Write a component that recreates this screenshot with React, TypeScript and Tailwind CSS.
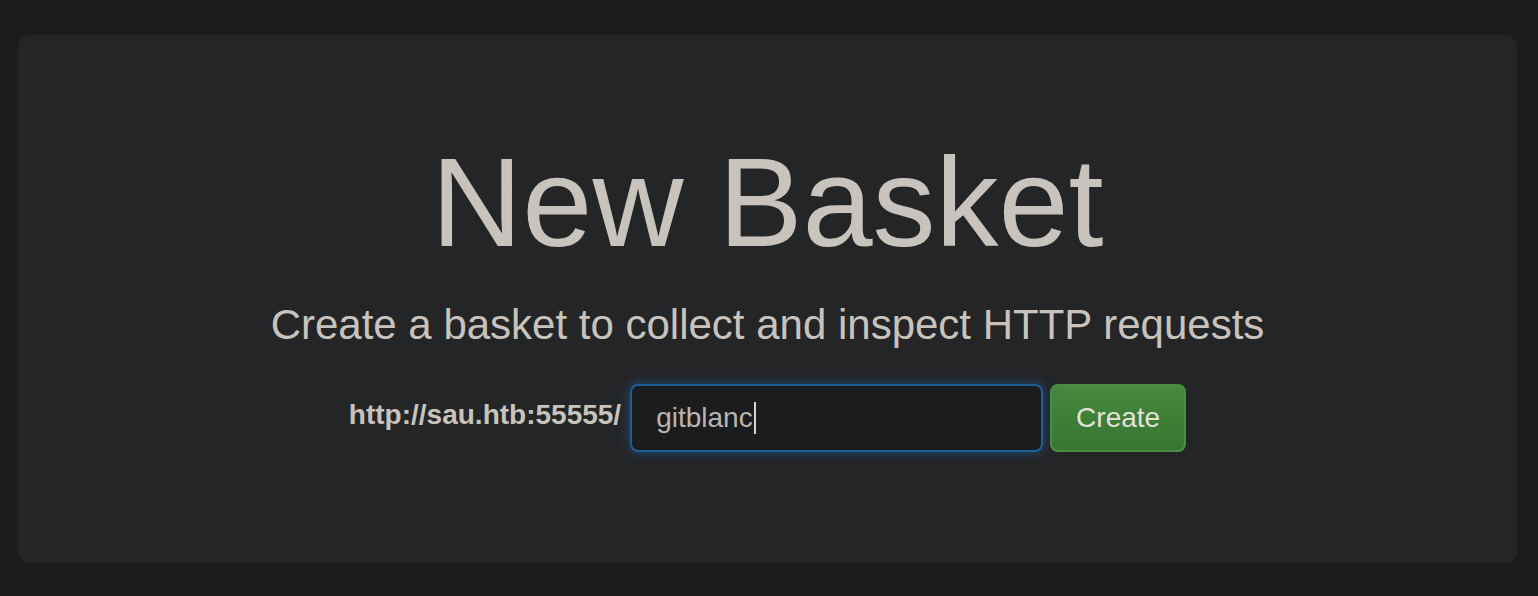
export default function App() {
  return (
    <div className="min-h-[596px] bg-[#1b1c1e] pt-[35px] pr-[21px] pb-[33px] pl-[18px] font-['Liberation_Sans',Arial,sans-serif]">
      <div className="flex h-[528px] flex-col items-center rounded-[12px] bg-[#242527] pt-[105px]">
        <h1 className="text-[126px] leading-none font-normal text-[#c8c3bc]">New Basket</h1>
        <p className="mt-[38px] text-[42px] leading-none text-[#c8c3bc]">
          Create a basket to collect and inspect HTTP requests
        </p>
        <form className="mt-[38px] flex items-center" onSubmit={(e) => e.preventDefault()}>
          <label className="mb-[6px] text-[28px] font-bold text-[#c8c3bc]">http://sau.htb:55555/</label>
          <div className="ml-[9px] flex h-[68px] w-[413px] items-center rounded-[8px] border-2 border-[#1d5e96] bg-[#1b1c1e] px-[24px] text-[28px] text-[#bab5ad] shadow-[0_0_12px_rgba(30,110,190,0.55)]">
            <span>gitblanc</span>
            <span className="ml-[1px] h-[32px] w-[2px] bg-[#d8d4ce]" />
          </div>
          <button
            type="submit"
            className="ml-[7px] h-[68px] w-[136px] rounded-[8px] border-2 border-[#4a8e43] bg-gradient-to-b from-[#46893f] to-[#367631] text-[28px] text-[#e4e1dc]"
          >
            Create
          </button>
        </form>
      </div>
    </div>
  );
}
